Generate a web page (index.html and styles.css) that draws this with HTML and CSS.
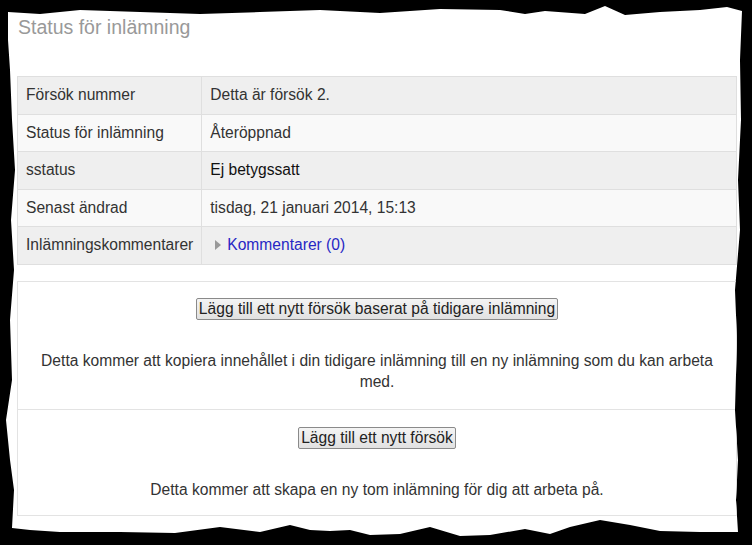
FILE: index.html
```html
<!DOCTYPE html>
<html lang="sv">
<head>
    <meta charset="UTF-8">
    <meta name="viewport" content="width=device-width, initial-scale=1.0">
    <title>Status för inlämning</title>
    <link rel="stylesheet" href="styles.css">
</head>
<body>
    <div class="paper">
        <h2 class="title">Status för inlämning</h2>

        <table class="status">
            <tbody>
                <tr>
                    <td class="label">Försök nummer</td>
                    <td>Detta är försök 2.</td>
                </tr>
                <tr>
                    <td class="label">Status för inlämning</td>
                    <td>Återöppnad</td>
                </tr>
                <tr>
                    <td class="label">sstatus</td>
                    <td class="dark">Ej betygssatt</td>
                </tr>
                <tr>
                    <td class="label">Senast ändrad</td>
                    <td>tisdag, 21 januari 2014, 15:13</td>
                </tr>
                <tr>
                    <td class="label">Inlämningskommentarer</td>
                    <td><span class="arrow"></span><a href="#">Kommentarer (0)</a></td>
                </tr>
            </tbody>
        </table>

        <div class="box">
            <button>Lägg till ett nytt försök baserat på tidigare inlämning</button>
            <p>Detta kommer att kopiera innehållet i din tidigare inlämning till en ny inlämning som du kan arbeta med.</p>
        </div>
        <div class="box last">
            <button>Lägg till ett nytt försök</button>
            <p>Detta kommer att skapa en ny tom inlämning för dig att arbeta på.</p>
        </div>
    </div>
</body>
</html>
```

FILE: styles.css
```css
html, body {
    margin: 0;
    height: 100%;
    background: #000;
}
body {
    font-family: "Liberation Sans", Arial, sans-serif;
    font-size: 15.6px;
    color: #333;
}
.paper {
    box-sizing: border-box;
    width: 752px;
    height: 545px;
    padding: 14px 15px 0 17px;
    background: #fff;
    overflow: hidden;
    clip-path: polygon(
        8px 12px, 40px 14px, 80px 10px, 140px 12px, 200px 14px, 260px 12px,
        320px 10px, 380px 13px, 440px 9px, 500px 10px, 525px 14px, 545px 11px,
        585px 14px, 605px 6px, 625px 15px, 660px 12px, 700px 10px, 727px 7px,
        742px 11px, 740px 60px, 741px 120px, 738px 180px, 740px 230px,
        735px 290px, 737px 340px, 735px 410px, 738px 460px, 736px 500px,
        738px 532px, 700px 532px, 660px 531px, 630px 525px, 600px 520px,
        570px 527px, 550px 534px, 525px 529px, 490px 535px, 460px 536px,
        430px 527px, 400px 534px, 370px 535px, 350px 530px, 330px 531px,
        310px 530px, 290px 525px, 260px 532px, 220px 527px, 175px 533px,
        120px 532px, 60px 532px, 30px 530px, 12px 528px, 14px 490px,
        10px 460px, 6px 420px, 12px 380px, 10px 320px, 14px 270px,
        11px 220px, 15px 170px, 12px 120px, 10px 70px, 8px 40px
    );
}
.title {
    margin: 0 0 36px 1px;
    font-size: 19.5px;
    font-weight: normal;
    line-height: 26px;
    color: #999;
}
table.status {
    width: 720px;
    border-collapse: collapse;
}
table.status td {
    border: 1px solid #dfdfdf;
    padding: 8px 8px;
    line-height: 20.6px;
    text-align: left;
}
table.status tr:nth-child(odd) td {
    background-color: #efefef;
}
table.status tr:nth-child(even) td {
    background-color: #f9f9f9;
}
td.label {
    width: 165px;
}
td.dark {
    color: #111;
}
.arrow {
    display: inline-block;
    width: 0;
    height: 0;
    margin: 0 6px 0 5px;
    border-top: 5px solid transparent;
    border-bottom: 5px solid transparent;
    border-left: 6px solid #999;
}
a {
    color: #2727c4;
    text-decoration: none;
}
.box {
    margin-top: 16px;
    padding: 16px 12px 17px;
    border: 1px solid #e3e3e3;
    border-bottom: none;
    text-align: center;
}
.box.last {
    margin-top: 0;
    padding-top: 17px;
    padding-bottom: 15px;
    border-bottom: 1px solid #e3e3e3;
}
.box p {
    margin: 30px 0 0;
    line-height: 21px;
}
button {
    font-family: "Liberation Sans", Arial, sans-serif;
    font-size: 15.6px;
    line-height: 18px;
    padding: 1px 2px;
    color: #222;
    background: linear-gradient(#f4f4f4, #e1e1e1);
    border: 1px solid #8a8a8a;
    border-radius: 2px;
}
```
